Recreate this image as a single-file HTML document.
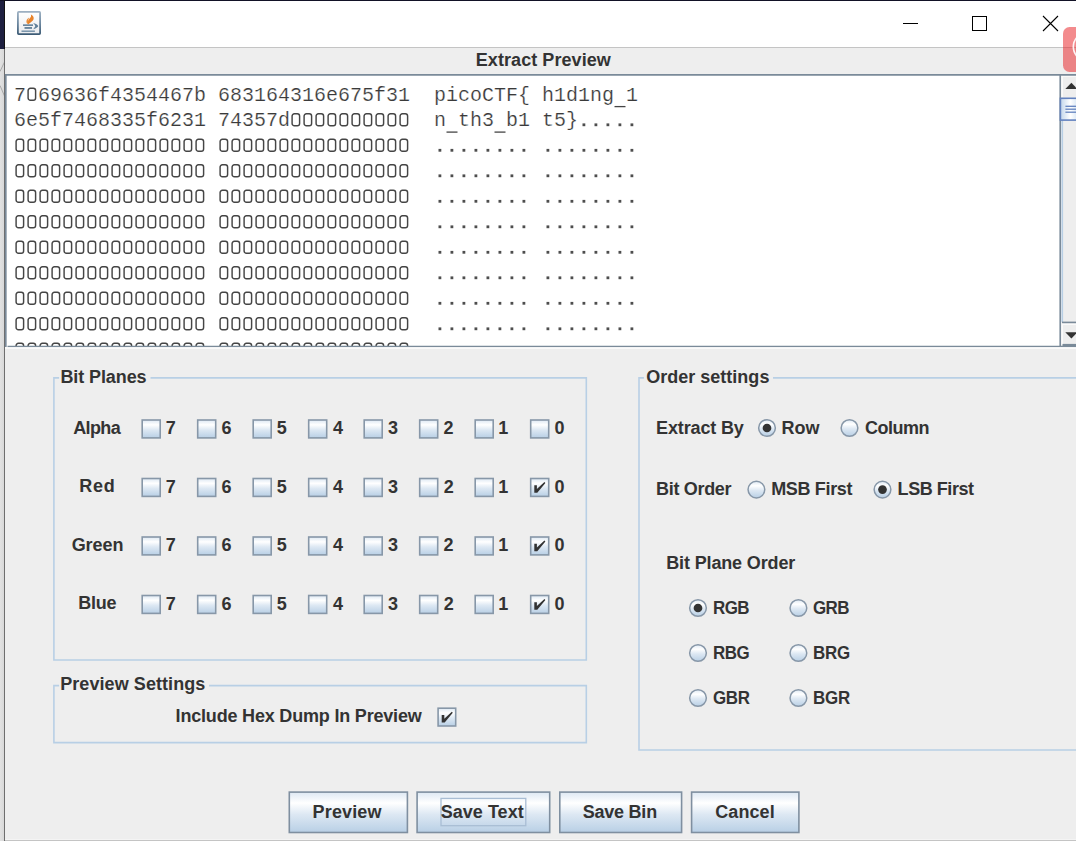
<!DOCTYPE html>
<html><head><meta charset="utf-8"><style>
*{box-sizing:border-box}
html,body{margin:0;padding:0}
body{width:1076px;height:841px;overflow:hidden;position:relative;background:#eeeeee;font-family:"Liberation Sans",sans-serif}
.a{position:absolute}
.t{position:absolute;white-space:pre;font:bold 18px/20px "Liberation Sans",sans-serif;color:#333333}
.mono{position:absolute;white-space:pre;font:20px/25.5px "Liberation Mono",monospace;color:#3a3a3a;-webkit-text-stroke:0.2px #ffffff}
</style></head><body>

<div class="a" style="left:0;top:0;width:4px;height:49px;background:#1e2040"></div>
<div class="a" style="left:0;top:49px;width:4px;height:792px;background:linear-gradient(to right,#e2e2e2,#d8d8d8)"></div>
<svg class="a" style="left:0;top:55px" width="5" height="50"><path d="M4.5 7 L0 16.5 M0 30.5 L4.5 41" stroke="#9a9a9a" stroke-width="0.8" fill="none"/></svg>
<div class="a" style="left:0;top:0;width:1076px;height:1px;background:#121226"></div>
<div class="a" style="left:4px;top:0;width:1px;height:49px;background:#111"></div>
<div class="a" style="left:4px;top:49px;width:1px;height:792px;background:#6e6e6e"></div>
<div class="a" style="left:5px;top:1px;width:1071px;height:46px;background:#ffffff"></div>
<div class="a" style="left:5px;top:47px;width:1071px;height:1px;background:#c4c4c4"></div>
<svg class="a" style="left:17px;top:11px" width="24" height="24" viewBox="0 0 24 24">
<defs><linearGradient id="ig" x1="0" y1="0" x2="0" y2="1"><stop offset="0" stop-color="#ffffff"/><stop offset="1" stop-color="#e9ebee"/></linearGradient>
<linearGradient id="is" x1="0" y1="0" x2="0" y2="1"><stop offset="0" stop-color="#9db0c2"/><stop offset="0.5" stop-color="#6f8aa2"/><stop offset="1" stop-color="#3d5c76"/></linearGradient></defs>
<rect x="0.9" y="0.9" width="22.2" height="22.2" rx="0.8" fill="url(#ig)" stroke="url(#is)" stroke-width="1.8"/>
<path d="M11.0 13.4 C10.0 10.6 11.8 8.4 13.4 6.6 C14.2 5.6 14.2 4.4 13.8 3.4 C16.8 4.6 17.6 7.6 15.6 9.8 C14.2 11.2 12.4 12.2 11.0 13.4 Z" fill="#e8832a"/>
<path d="M10.6 13.2 C8.6 11.2 9.2 8.4 12.2 6.6 C10.8 9.2 11.8 11.2 10.6 13.2 Z" fill="#ec8e3a"/>
<rect x="6" y="13.4" width="10" height="1.5" fill="#5a7a94"/>
<rect x="7.5" y="16.1" width="7.5" height="1.7" fill="#5a7a94"/>
<path d="M16.2 12.0 C19.6 12.6 21.2 14.4 21.2 15.1 C21.2 15.8 19.6 17.6 16.2 18.2 C17.4 16.8 18.2 15.9 18.2 15.1 C18.2 14.3 17.4 13.4 16.2 12.0 Z" fill="#5f7f99"/>
<rect x="4.5" y="19.5" width="13.4" height="1.4" fill="#6f8ca5"/>
</svg>
<div class="a" style="left:903px;top:23px;width:15px;height:1px;background:#000"></div>
<div class="a" style="left:972px;top:16px;width:15px;height:15px;border:1px solid #000"></div>
<svg class="a" style="left:1042px;top:15px" width="17" height="17"><path d="M1 1 L16 16 M16 1 L1 16" stroke="#000" stroke-width="1.1"/></svg>
<div class="a" style="left:5px;top:74px;width:1071px;height:274px;background:#fff"></div>
<div class="a" style="left:6px;top:75px;width:1054px;height:271px;overflow:hidden">
<div class="mono" style="left:8px;top:7.7px">7 69636f4354467b 683164316e675f31  picoCTF{ h1d1ng 1
6e5f7468335f6231 74357d            n th3 b1 t5}     
                                                    
                                                    
                                                    
                                                    
                                                    
                                                    
                                                    
                                                    
                                                    </div>
<svg class="a" style="left:0;top:0" width="1054" height="271"><defs><rect id="z" x="0" y="0" width="7.5" height="11.9" rx="2.3" fill="none" stroke="#454545" stroke-width="1.45"/></defs><use href="#z" x="22.1" y="13.3"/><line x1="608.5" y1="31.6" x2="619.5" y2="31.6" stroke="#454545" stroke-width="1.3"/><use href="#z" x="286.1" y="38.8"/><use href="#z" x="298.1" y="38.8"/><use href="#z" x="310.1" y="38.8"/><use href="#z" x="322.1" y="38.8"/><use href="#z" x="334.1" y="38.8"/><use href="#z" x="346.1" y="38.8"/><use href="#z" x="358.1" y="38.8"/><use href="#z" x="370.1" y="38.8"/><use href="#z" x="382.1" y="38.8"/><use href="#z" x="394.1" y="38.8"/><line x1="440.5" y1="57.1" x2="451.5" y2="57.1" stroke="#454545" stroke-width="1.3"/><line x1="488.5" y1="57.1" x2="499.5" y2="57.1" stroke="#454545" stroke-width="1.3"/><rect x="576.5" y="48.4" width="2.8" height="2.8" fill="#4e4e4e"/><rect x="588.5" y="48.4" width="2.8" height="2.8" fill="#4e4e4e"/><rect x="600.5" y="48.4" width="2.8" height="2.8" fill="#4e4e4e"/><rect x="612.5" y="48.4" width="2.8" height="2.8" fill="#4e4e4e"/><rect x="624.5" y="48.4" width="2.8" height="2.8" fill="#4e4e4e"/><use href="#z" x="10.1" y="64.3"/><use href="#z" x="22.1" y="64.3"/><use href="#z" x="34.1" y="64.3"/><use href="#z" x="46.1" y="64.3"/><use href="#z" x="58.1" y="64.3"/><use href="#z" x="70.1" y="64.3"/><use href="#z" x="82.1" y="64.3"/><use href="#z" x="94.1" y="64.3"/><use href="#z" x="106.1" y="64.3"/><use href="#z" x="118.1" y="64.3"/><use href="#z" x="130.1" y="64.3"/><use href="#z" x="142.1" y="64.3"/><use href="#z" x="154.1" y="64.3"/><use href="#z" x="166.1" y="64.3"/><use href="#z" x="178.1" y="64.3"/><use href="#z" x="190.1" y="64.3"/><use href="#z" x="214.1" y="64.3"/><use href="#z" x="226.1" y="64.3"/><use href="#z" x="238.1" y="64.3"/><use href="#z" x="250.1" y="64.3"/><use href="#z" x="262.1" y="64.3"/><use href="#z" x="274.1" y="64.3"/><use href="#z" x="286.1" y="64.3"/><use href="#z" x="298.1" y="64.3"/><use href="#z" x="310.1" y="64.3"/><use href="#z" x="322.1" y="64.3"/><use href="#z" x="334.1" y="64.3"/><use href="#z" x="346.1" y="64.3"/><use href="#z" x="358.1" y="64.3"/><use href="#z" x="370.1" y="64.3"/><use href="#z" x="382.1" y="64.3"/><use href="#z" x="394.1" y="64.3"/><rect x="432.5" y="73.9" width="2.8" height="2.8" fill="#4e4e4e"/><rect x="444.5" y="73.9" width="2.8" height="2.8" fill="#4e4e4e"/><rect x="456.5" y="73.9" width="2.8" height="2.8" fill="#4e4e4e"/><rect x="468.5" y="73.9" width="2.8" height="2.8" fill="#4e4e4e"/><rect x="480.5" y="73.9" width="2.8" height="2.8" fill="#4e4e4e"/><rect x="492.5" y="73.9" width="2.8" height="2.8" fill="#4e4e4e"/><rect x="504.5" y="73.9" width="2.8" height="2.8" fill="#4e4e4e"/><rect x="516.5" y="73.9" width="2.8" height="2.8" fill="#4e4e4e"/><rect x="540.5" y="73.9" width="2.8" height="2.8" fill="#4e4e4e"/><rect x="552.5" y="73.9" width="2.8" height="2.8" fill="#4e4e4e"/><rect x="564.5" y="73.9" width="2.8" height="2.8" fill="#4e4e4e"/><rect x="576.5" y="73.9" width="2.8" height="2.8" fill="#4e4e4e"/><rect x="588.5" y="73.9" width="2.8" height="2.8" fill="#4e4e4e"/><rect x="600.5" y="73.9" width="2.8" height="2.8" fill="#4e4e4e"/><rect x="612.5" y="73.9" width="2.8" height="2.8" fill="#4e4e4e"/><rect x="624.5" y="73.9" width="2.8" height="2.8" fill="#4e4e4e"/><use href="#z" x="10.1" y="89.8"/><use href="#z" x="22.1" y="89.8"/><use href="#z" x="34.1" y="89.8"/><use href="#z" x="46.1" y="89.8"/><use href="#z" x="58.1" y="89.8"/><use href="#z" x="70.1" y="89.8"/><use href="#z" x="82.1" y="89.8"/><use href="#z" x="94.1" y="89.8"/><use href="#z" x="106.1" y="89.8"/><use href="#z" x="118.1" y="89.8"/><use href="#z" x="130.1" y="89.8"/><use href="#z" x="142.1" y="89.8"/><use href="#z" x="154.1" y="89.8"/><use href="#z" x="166.1" y="89.8"/><use href="#z" x="178.1" y="89.8"/><use href="#z" x="190.1" y="89.8"/><use href="#z" x="214.1" y="89.8"/><use href="#z" x="226.1" y="89.8"/><use href="#z" x="238.1" y="89.8"/><use href="#z" x="250.1" y="89.8"/><use href="#z" x="262.1" y="89.8"/><use href="#z" x="274.1" y="89.8"/><use href="#z" x="286.1" y="89.8"/><use href="#z" x="298.1" y="89.8"/><use href="#z" x="310.1" y="89.8"/><use href="#z" x="322.1" y="89.8"/><use href="#z" x="334.1" y="89.8"/><use href="#z" x="346.1" y="89.8"/><use href="#z" x="358.1" y="89.8"/><use href="#z" x="370.1" y="89.8"/><use href="#z" x="382.1" y="89.8"/><use href="#z" x="394.1" y="89.8"/><rect x="432.5" y="99.4" width="2.8" height="2.8" fill="#4e4e4e"/><rect x="444.5" y="99.4" width="2.8" height="2.8" fill="#4e4e4e"/><rect x="456.5" y="99.4" width="2.8" height="2.8" fill="#4e4e4e"/><rect x="468.5" y="99.4" width="2.8" height="2.8" fill="#4e4e4e"/><rect x="480.5" y="99.4" width="2.8" height="2.8" fill="#4e4e4e"/><rect x="492.5" y="99.4" width="2.8" height="2.8" fill="#4e4e4e"/><rect x="504.5" y="99.4" width="2.8" height="2.8" fill="#4e4e4e"/><rect x="516.5" y="99.4" width="2.8" height="2.8" fill="#4e4e4e"/><rect x="540.5" y="99.4" width="2.8" height="2.8" fill="#4e4e4e"/><rect x="552.5" y="99.4" width="2.8" height="2.8" fill="#4e4e4e"/><rect x="564.5" y="99.4" width="2.8" height="2.8" fill="#4e4e4e"/><rect x="576.5" y="99.4" width="2.8" height="2.8" fill="#4e4e4e"/><rect x="588.5" y="99.4" width="2.8" height="2.8" fill="#4e4e4e"/><rect x="600.5" y="99.4" width="2.8" height="2.8" fill="#4e4e4e"/><rect x="612.5" y="99.4" width="2.8" height="2.8" fill="#4e4e4e"/><rect x="624.5" y="99.4" width="2.8" height="2.8" fill="#4e4e4e"/><use href="#z" x="10.1" y="115.3"/><use href="#z" x="22.1" y="115.3"/><use href="#z" x="34.1" y="115.3"/><use href="#z" x="46.1" y="115.3"/><use href="#z" x="58.1" y="115.3"/><use href="#z" x="70.1" y="115.3"/><use href="#z" x="82.1" y="115.3"/><use href="#z" x="94.1" y="115.3"/><use href="#z" x="106.1" y="115.3"/><use href="#z" x="118.1" y="115.3"/><use href="#z" x="130.1" y="115.3"/><use href="#z" x="142.1" y="115.3"/><use href="#z" x="154.1" y="115.3"/><use href="#z" x="166.1" y="115.3"/><use href="#z" x="178.1" y="115.3"/><use href="#z" x="190.1" y="115.3"/><use href="#z" x="214.1" y="115.3"/><use href="#z" x="226.1" y="115.3"/><use href="#z" x="238.1" y="115.3"/><use href="#z" x="250.1" y="115.3"/><use href="#z" x="262.1" y="115.3"/><use href="#z" x="274.1" y="115.3"/><use href="#z" x="286.1" y="115.3"/><use href="#z" x="298.1" y="115.3"/><use href="#z" x="310.1" y="115.3"/><use href="#z" x="322.1" y="115.3"/><use href="#z" x="334.1" y="115.3"/><use href="#z" x="346.1" y="115.3"/><use href="#z" x="358.1" y="115.3"/><use href="#z" x="370.1" y="115.3"/><use href="#z" x="382.1" y="115.3"/><use href="#z" x="394.1" y="115.3"/><rect x="432.5" y="124.9" width="2.8" height="2.8" fill="#4e4e4e"/><rect x="444.5" y="124.9" width="2.8" height="2.8" fill="#4e4e4e"/><rect x="456.5" y="124.9" width="2.8" height="2.8" fill="#4e4e4e"/><rect x="468.5" y="124.9" width="2.8" height="2.8" fill="#4e4e4e"/><rect x="480.5" y="124.9" width="2.8" height="2.8" fill="#4e4e4e"/><rect x="492.5" y="124.9" width="2.8" height="2.8" fill="#4e4e4e"/><rect x="504.5" y="124.9" width="2.8" height="2.8" fill="#4e4e4e"/><rect x="516.5" y="124.9" width="2.8" height="2.8" fill="#4e4e4e"/><rect x="540.5" y="124.9" width="2.8" height="2.8" fill="#4e4e4e"/><rect x="552.5" y="124.9" width="2.8" height="2.8" fill="#4e4e4e"/><rect x="564.5" y="124.9" width="2.8" height="2.8" fill="#4e4e4e"/><rect x="576.5" y="124.9" width="2.8" height="2.8" fill="#4e4e4e"/><rect x="588.5" y="124.9" width="2.8" height="2.8" fill="#4e4e4e"/><rect x="600.5" y="124.9" width="2.8" height="2.8" fill="#4e4e4e"/><rect x="612.5" y="124.9" width="2.8" height="2.8" fill="#4e4e4e"/><rect x="624.5" y="124.9" width="2.8" height="2.8" fill="#4e4e4e"/><use href="#z" x="10.1" y="140.8"/><use href="#z" x="22.1" y="140.8"/><use href="#z" x="34.1" y="140.8"/><use href="#z" x="46.1" y="140.8"/><use href="#z" x="58.1" y="140.8"/><use href="#z" x="70.1" y="140.8"/><use href="#z" x="82.1" y="140.8"/><use href="#z" x="94.1" y="140.8"/><use href="#z" x="106.1" y="140.8"/><use href="#z" x="118.1" y="140.8"/><use href="#z" x="130.1" y="140.8"/><use href="#z" x="142.1" y="140.8"/><use href="#z" x="154.1" y="140.8"/><use href="#z" x="166.1" y="140.8"/><use href="#z" x="178.1" y="140.8"/><use href="#z" x="190.1" y="140.8"/><use href="#z" x="214.1" y="140.8"/><use href="#z" x="226.1" y="140.8"/><use href="#z" x="238.1" y="140.8"/><use href="#z" x="250.1" y="140.8"/><use href="#z" x="262.1" y="140.8"/><use href="#z" x="274.1" y="140.8"/><use href="#z" x="286.1" y="140.8"/><use href="#z" x="298.1" y="140.8"/><use href="#z" x="310.1" y="140.8"/><use href="#z" x="322.1" y="140.8"/><use href="#z" x="334.1" y="140.8"/><use href="#z" x="346.1" y="140.8"/><use href="#z" x="358.1" y="140.8"/><use href="#z" x="370.1" y="140.8"/><use href="#z" x="382.1" y="140.8"/><use href="#z" x="394.1" y="140.8"/><rect x="432.5" y="150.4" width="2.8" height="2.8" fill="#4e4e4e"/><rect x="444.5" y="150.4" width="2.8" height="2.8" fill="#4e4e4e"/><rect x="456.5" y="150.4" width="2.8" height="2.8" fill="#4e4e4e"/><rect x="468.5" y="150.4" width="2.8" height="2.8" fill="#4e4e4e"/><rect x="480.5" y="150.4" width="2.8" height="2.8" fill="#4e4e4e"/><rect x="492.5" y="150.4" width="2.8" height="2.8" fill="#4e4e4e"/><rect x="504.5" y="150.4" width="2.8" height="2.8" fill="#4e4e4e"/><rect x="516.5" y="150.4" width="2.8" height="2.8" fill="#4e4e4e"/><rect x="540.5" y="150.4" width="2.8" height="2.8" fill="#4e4e4e"/><rect x="552.5" y="150.4" width="2.8" height="2.8" fill="#4e4e4e"/><rect x="564.5" y="150.4" width="2.8" height="2.8" fill="#4e4e4e"/><rect x="576.5" y="150.4" width="2.8" height="2.8" fill="#4e4e4e"/><rect x="588.5" y="150.4" width="2.8" height="2.8" fill="#4e4e4e"/><rect x="600.5" y="150.4" width="2.8" height="2.8" fill="#4e4e4e"/><rect x="612.5" y="150.4" width="2.8" height="2.8" fill="#4e4e4e"/><rect x="624.5" y="150.4" width="2.8" height="2.8" fill="#4e4e4e"/><use href="#z" x="10.1" y="166.3"/><use href="#z" x="22.1" y="166.3"/><use href="#z" x="34.1" y="166.3"/><use href="#z" x="46.1" y="166.3"/><use href="#z" x="58.1" y="166.3"/><use href="#z" x="70.1" y="166.3"/><use href="#z" x="82.1" y="166.3"/><use href="#z" x="94.1" y="166.3"/><use href="#z" x="106.1" y="166.3"/><use href="#z" x="118.1" y="166.3"/><use href="#z" x="130.1" y="166.3"/><use href="#z" x="142.1" y="166.3"/><use href="#z" x="154.1" y="166.3"/><use href="#z" x="166.1" y="166.3"/><use href="#z" x="178.1" y="166.3"/><use href="#z" x="190.1" y="166.3"/><use href="#z" x="214.1" y="166.3"/><use href="#z" x="226.1" y="166.3"/><use href="#z" x="238.1" y="166.3"/><use href="#z" x="250.1" y="166.3"/><use href="#z" x="262.1" y="166.3"/><use href="#z" x="274.1" y="166.3"/><use href="#z" x="286.1" y="166.3"/><use href="#z" x="298.1" y="166.3"/><use href="#z" x="310.1" y="166.3"/><use href="#z" x="322.1" y="166.3"/><use href="#z" x="334.1" y="166.3"/><use href="#z" x="346.1" y="166.3"/><use href="#z" x="358.1" y="166.3"/><use href="#z" x="370.1" y="166.3"/><use href="#z" x="382.1" y="166.3"/><use href="#z" x="394.1" y="166.3"/><rect x="432.5" y="175.9" width="2.8" height="2.8" fill="#4e4e4e"/><rect x="444.5" y="175.9" width="2.8" height="2.8" fill="#4e4e4e"/><rect x="456.5" y="175.9" width="2.8" height="2.8" fill="#4e4e4e"/><rect x="468.5" y="175.9" width="2.8" height="2.8" fill="#4e4e4e"/><rect x="480.5" y="175.9" width="2.8" height="2.8" fill="#4e4e4e"/><rect x="492.5" y="175.9" width="2.8" height="2.8" fill="#4e4e4e"/><rect x="504.5" y="175.9" width="2.8" height="2.8" fill="#4e4e4e"/><rect x="516.5" y="175.9" width="2.8" height="2.8" fill="#4e4e4e"/><rect x="540.5" y="175.9" width="2.8" height="2.8" fill="#4e4e4e"/><rect x="552.5" y="175.9" width="2.8" height="2.8" fill="#4e4e4e"/><rect x="564.5" y="175.9" width="2.8" height="2.8" fill="#4e4e4e"/><rect x="576.5" y="175.9" width="2.8" height="2.8" fill="#4e4e4e"/><rect x="588.5" y="175.9" width="2.8" height="2.8" fill="#4e4e4e"/><rect x="600.5" y="175.9" width="2.8" height="2.8" fill="#4e4e4e"/><rect x="612.5" y="175.9" width="2.8" height="2.8" fill="#4e4e4e"/><rect x="624.5" y="175.9" width="2.8" height="2.8" fill="#4e4e4e"/><use href="#z" x="10.1" y="191.8"/><use href="#z" x="22.1" y="191.8"/><use href="#z" x="34.1" y="191.8"/><use href="#z" x="46.1" y="191.8"/><use href="#z" x="58.1" y="191.8"/><use href="#z" x="70.1" y="191.8"/><use href="#z" x="82.1" y="191.8"/><use href="#z" x="94.1" y="191.8"/><use href="#z" x="106.1" y="191.8"/><use href="#z" x="118.1" y="191.8"/><use href="#z" x="130.1" y="191.8"/><use href="#z" x="142.1" y="191.8"/><use href="#z" x="154.1" y="191.8"/><use href="#z" x="166.1" y="191.8"/><use href="#z" x="178.1" y="191.8"/><use href="#z" x="190.1" y="191.8"/><use href="#z" x="214.1" y="191.8"/><use href="#z" x="226.1" y="191.8"/><use href="#z" x="238.1" y="191.8"/><use href="#z" x="250.1" y="191.8"/><use href="#z" x="262.1" y="191.8"/><use href="#z" x="274.1" y="191.8"/><use href="#z" x="286.1" y="191.8"/><use href="#z" x="298.1" y="191.8"/><use href="#z" x="310.1" y="191.8"/><use href="#z" x="322.1" y="191.8"/><use href="#z" x="334.1" y="191.8"/><use href="#z" x="346.1" y="191.8"/><use href="#z" x="358.1" y="191.8"/><use href="#z" x="370.1" y="191.8"/><use href="#z" x="382.1" y="191.8"/><use href="#z" x="394.1" y="191.8"/><rect x="432.5" y="201.4" width="2.8" height="2.8" fill="#4e4e4e"/><rect x="444.5" y="201.4" width="2.8" height="2.8" fill="#4e4e4e"/><rect x="456.5" y="201.4" width="2.8" height="2.8" fill="#4e4e4e"/><rect x="468.5" y="201.4" width="2.8" height="2.8" fill="#4e4e4e"/><rect x="480.5" y="201.4" width="2.8" height="2.8" fill="#4e4e4e"/><rect x="492.5" y="201.4" width="2.8" height="2.8" fill="#4e4e4e"/><rect x="504.5" y="201.4" width="2.8" height="2.8" fill="#4e4e4e"/><rect x="516.5" y="201.4" width="2.8" height="2.8" fill="#4e4e4e"/><rect x="540.5" y="201.4" width="2.8" height="2.8" fill="#4e4e4e"/><rect x="552.5" y="201.4" width="2.8" height="2.8" fill="#4e4e4e"/><rect x="564.5" y="201.4" width="2.8" height="2.8" fill="#4e4e4e"/><rect x="576.5" y="201.4" width="2.8" height="2.8" fill="#4e4e4e"/><rect x="588.5" y="201.4" width="2.8" height="2.8" fill="#4e4e4e"/><rect x="600.5" y="201.4" width="2.8" height="2.8" fill="#4e4e4e"/><rect x="612.5" y="201.4" width="2.8" height="2.8" fill="#4e4e4e"/><rect x="624.5" y="201.4" width="2.8" height="2.8" fill="#4e4e4e"/><use href="#z" x="10.1" y="217.3"/><use href="#z" x="22.1" y="217.3"/><use href="#z" x="34.1" y="217.3"/><use href="#z" x="46.1" y="217.3"/><use href="#z" x="58.1" y="217.3"/><use href="#z" x="70.1" y="217.3"/><use href="#z" x="82.1" y="217.3"/><use href="#z" x="94.1" y="217.3"/><use href="#z" x="106.1" y="217.3"/><use href="#z" x="118.1" y="217.3"/><use href="#z" x="130.1" y="217.3"/><use href="#z" x="142.1" y="217.3"/><use href="#z" x="154.1" y="217.3"/><use href="#z" x="166.1" y="217.3"/><use href="#z" x="178.1" y="217.3"/><use href="#z" x="190.1" y="217.3"/><use href="#z" x="214.1" y="217.3"/><use href="#z" x="226.1" y="217.3"/><use href="#z" x="238.1" y="217.3"/><use href="#z" x="250.1" y="217.3"/><use href="#z" x="262.1" y="217.3"/><use href="#z" x="274.1" y="217.3"/><use href="#z" x="286.1" y="217.3"/><use href="#z" x="298.1" y="217.3"/><use href="#z" x="310.1" y="217.3"/><use href="#z" x="322.1" y="217.3"/><use href="#z" x="334.1" y="217.3"/><use href="#z" x="346.1" y="217.3"/><use href="#z" x="358.1" y="217.3"/><use href="#z" x="370.1" y="217.3"/><use href="#z" x="382.1" y="217.3"/><use href="#z" x="394.1" y="217.3"/><rect x="432.5" y="226.9" width="2.8" height="2.8" fill="#4e4e4e"/><rect x="444.5" y="226.9" width="2.8" height="2.8" fill="#4e4e4e"/><rect x="456.5" y="226.9" width="2.8" height="2.8" fill="#4e4e4e"/><rect x="468.5" y="226.9" width="2.8" height="2.8" fill="#4e4e4e"/><rect x="480.5" y="226.9" width="2.8" height="2.8" fill="#4e4e4e"/><rect x="492.5" y="226.9" width="2.8" height="2.8" fill="#4e4e4e"/><rect x="504.5" y="226.9" width="2.8" height="2.8" fill="#4e4e4e"/><rect x="516.5" y="226.9" width="2.8" height="2.8" fill="#4e4e4e"/><rect x="540.5" y="226.9" width="2.8" height="2.8" fill="#4e4e4e"/><rect x="552.5" y="226.9" width="2.8" height="2.8" fill="#4e4e4e"/><rect x="564.5" y="226.9" width="2.8" height="2.8" fill="#4e4e4e"/><rect x="576.5" y="226.9" width="2.8" height="2.8" fill="#4e4e4e"/><rect x="588.5" y="226.9" width="2.8" height="2.8" fill="#4e4e4e"/><rect x="600.5" y="226.9" width="2.8" height="2.8" fill="#4e4e4e"/><rect x="612.5" y="226.9" width="2.8" height="2.8" fill="#4e4e4e"/><rect x="624.5" y="226.9" width="2.8" height="2.8" fill="#4e4e4e"/><use href="#z" x="10.1" y="242.8"/><use href="#z" x="22.1" y="242.8"/><use href="#z" x="34.1" y="242.8"/><use href="#z" x="46.1" y="242.8"/><use href="#z" x="58.1" y="242.8"/><use href="#z" x="70.1" y="242.8"/><use href="#z" x="82.1" y="242.8"/><use href="#z" x="94.1" y="242.8"/><use href="#z" x="106.1" y="242.8"/><use href="#z" x="118.1" y="242.8"/><use href="#z" x="130.1" y="242.8"/><use href="#z" x="142.1" y="242.8"/><use href="#z" x="154.1" y="242.8"/><use href="#z" x="166.1" y="242.8"/><use href="#z" x="178.1" y="242.8"/><use href="#z" x="190.1" y="242.8"/><use href="#z" x="214.1" y="242.8"/><use href="#z" x="226.1" y="242.8"/><use href="#z" x="238.1" y="242.8"/><use href="#z" x="250.1" y="242.8"/><use href="#z" x="262.1" y="242.8"/><use href="#z" x="274.1" y="242.8"/><use href="#z" x="286.1" y="242.8"/><use href="#z" x="298.1" y="242.8"/><use href="#z" x="310.1" y="242.8"/><use href="#z" x="322.1" y="242.8"/><use href="#z" x="334.1" y="242.8"/><use href="#z" x="346.1" y="242.8"/><use href="#z" x="358.1" y="242.8"/><use href="#z" x="370.1" y="242.8"/><use href="#z" x="382.1" y="242.8"/><use href="#z" x="394.1" y="242.8"/><rect x="432.5" y="252.4" width="2.8" height="2.8" fill="#4e4e4e"/><rect x="444.5" y="252.4" width="2.8" height="2.8" fill="#4e4e4e"/><rect x="456.5" y="252.4" width="2.8" height="2.8" fill="#4e4e4e"/><rect x="468.5" y="252.4" width="2.8" height="2.8" fill="#4e4e4e"/><rect x="480.5" y="252.4" width="2.8" height="2.8" fill="#4e4e4e"/><rect x="492.5" y="252.4" width="2.8" height="2.8" fill="#4e4e4e"/><rect x="504.5" y="252.4" width="2.8" height="2.8" fill="#4e4e4e"/><rect x="516.5" y="252.4" width="2.8" height="2.8" fill="#4e4e4e"/><rect x="540.5" y="252.4" width="2.8" height="2.8" fill="#4e4e4e"/><rect x="552.5" y="252.4" width="2.8" height="2.8" fill="#4e4e4e"/><rect x="564.5" y="252.4" width="2.8" height="2.8" fill="#4e4e4e"/><rect x="576.5" y="252.4" width="2.8" height="2.8" fill="#4e4e4e"/><rect x="588.5" y="252.4" width="2.8" height="2.8" fill="#4e4e4e"/><rect x="600.5" y="252.4" width="2.8" height="2.8" fill="#4e4e4e"/><rect x="612.5" y="252.4" width="2.8" height="2.8" fill="#4e4e4e"/><rect x="624.5" y="252.4" width="2.8" height="2.8" fill="#4e4e4e"/><use href="#z" x="10.1" y="268.3"/><use href="#z" x="22.1" y="268.3"/><use href="#z" x="34.1" y="268.3"/><use href="#z" x="46.1" y="268.3"/><use href="#z" x="58.1" y="268.3"/><use href="#z" x="70.1" y="268.3"/><use href="#z" x="82.1" y="268.3"/><use href="#z" x="94.1" y="268.3"/><use href="#z" x="106.1" y="268.3"/><use href="#z" x="118.1" y="268.3"/><use href="#z" x="130.1" y="268.3"/><use href="#z" x="142.1" y="268.3"/><use href="#z" x="154.1" y="268.3"/><use href="#z" x="166.1" y="268.3"/><use href="#z" x="178.1" y="268.3"/><use href="#z" x="190.1" y="268.3"/><use href="#z" x="214.1" y="268.3"/><use href="#z" x="226.1" y="268.3"/><use href="#z" x="238.1" y="268.3"/><use href="#z" x="250.1" y="268.3"/><use href="#z" x="262.1" y="268.3"/><use href="#z" x="274.1" y="268.3"/><use href="#z" x="286.1" y="268.3"/><use href="#z" x="298.1" y="268.3"/><use href="#z" x="310.1" y="268.3"/><use href="#z" x="322.1" y="268.3"/><use href="#z" x="334.1" y="268.3"/><use href="#z" x="346.1" y="268.3"/><use href="#z" x="358.1" y="268.3"/><use href="#z" x="370.1" y="268.3"/><use href="#z" x="382.1" y="268.3"/><use href="#z" x="394.1" y="268.3"/><rect x="432.5" y="277.9" width="2.8" height="2.8" fill="#4e4e4e"/><rect x="444.5" y="277.9" width="2.8" height="2.8" fill="#4e4e4e"/><rect x="456.5" y="277.9" width="2.8" height="2.8" fill="#4e4e4e"/><rect x="468.5" y="277.9" width="2.8" height="2.8" fill="#4e4e4e"/><rect x="480.5" y="277.9" width="2.8" height="2.8" fill="#4e4e4e"/><rect x="492.5" y="277.9" width="2.8" height="2.8" fill="#4e4e4e"/><rect x="504.5" y="277.9" width="2.8" height="2.8" fill="#4e4e4e"/><rect x="516.5" y="277.9" width="2.8" height="2.8" fill="#4e4e4e"/><rect x="540.5" y="277.9" width="2.8" height="2.8" fill="#4e4e4e"/><rect x="552.5" y="277.9" width="2.8" height="2.8" fill="#4e4e4e"/><rect x="564.5" y="277.9" width="2.8" height="2.8" fill="#4e4e4e"/><rect x="576.5" y="277.9" width="2.8" height="2.8" fill="#4e4e4e"/><rect x="588.5" y="277.9" width="2.8" height="2.8" fill="#4e4e4e"/><rect x="600.5" y="277.9" width="2.8" height="2.8" fill="#4e4e4e"/><rect x="612.5" y="277.9" width="2.8" height="2.8" fill="#4e4e4e"/><rect x="624.5" y="277.9" width="2.8" height="2.8" fill="#4e4e4e"/></svg>
</div>
<div class="a" style="left:1060px;top:75px;width:16px;height:271px;background:#eeeeee"></div>
<svg class="a" style="left:0;top:0" width="1076" height="841"><defs><linearGradient id="cbg" x1="0" y1="0" x2="0" y2="1"><stop offset="0" stop-color="#dde8f3"/><stop offset="0.27" stop-color="#ffffff"/><stop offset="0.55" stop-color="#dde8f3"/><stop offset="1" stop-color="#b8cfe5"/></linearGradient><linearGradient id="thg" x1="0" y1="0" x2="1" y2="0"><stop offset="0" stop-color="#c2d6ec"/><stop offset="0.5" stop-color="#ffffff"/><stop offset="1" stop-color="#c8dcf0"/></linearGradient></defs><line x1="1062.3" y1="75.5" x2="1062.3" y2="97" stroke="#fafafa" stroke-width="1.5"/><line x1="1062" y1="76.3" x2="1076" y2="76.3" stroke="#fafafa" stroke-width="1.2"/><line x1="1062.3" y1="120" x2="1062.3" y2="322" stroke="#b8cfe5" stroke-width="1.6"/><line x1="1062.3" y1="323" x2="1062.3" y2="345" stroke="#fafafa" stroke-width="1.5"/><line x1="1062" y1="324.2" x2="1076" y2="324.2" stroke="#fafafa" stroke-width="1.5"/><line x1="1062" y1="322.4" x2="1076" y2="322.4" stroke="#7a8a99" stroke-width="1.6"/><line x1="1062.5" y1="345.2" x2="1076" y2="345.2" stroke="#7a8a99" stroke-width="2.6"/><path d="M1065.3 88.9 L1071.4 82.8 L1077.5 88.9 Z" fill="#333"/><path d="M1065.3 332.3 L1071.4 338.4 L1077.5 332.3 Z" fill="#333"/><line x1="5" y1="74.8" x2="1076" y2="74.8" stroke="#7a8a99" stroke-width="1.7"/><line x1="5.8" y1="74" x2="5.8" y2="347" stroke="#7a8a99" stroke-width="1.7"/><line x1="1060.2" y1="75" x2="1060.2" y2="346" stroke="#7a8a99" stroke-width="1.6"/><line x1="7.5" y1="346.5" x2="1076" y2="346.5" stroke="#7a8a99" stroke-width="1.5"/><line x1="5" y1="348.1" x2="1076" y2="348.1" stroke="#fafafa" stroke-width="1.6"/><rect x="1060.4" y="98.3" width="20" height="21.8" fill="url(#thg)" stroke="#6382bf" stroke-width="1.6"/><line x1="1065.4" y1="106.3" x2="1076" y2="106.3" stroke="#6382bf" stroke-width="1.3"/><line x1="1065.4" y1="109.2" x2="1076" y2="109.2" stroke="#6382bf" stroke-width="1.3"/><line x1="1065.4" y1="112.2" x2="1076" y2="112.2" stroke="#6382bf" stroke-width="1.3"/><g fill="none" stroke="#b8cfe5" stroke-width="1.6"><path d="M59.1 377.9 L53.9 377.9 L53.9 660 L586.3 660 L586.3 377.9 L150.5 377.9"/><path d="M59.1 685.6 L53.9 685.6 L53.9 742.6 L586.3 742.6 L586.3 685.6 L209 685.6"/><path d="M643.9 377.9 L639 377.9 L639 750 L1080 750 M1080 377.9 L773 377.9"/></g><rect x="142.20" y="420.00" width="18.00" height="17.90" fill="url(#cbg)" stroke="#8797a8" stroke-width="1.6"/><rect x="197.70" y="420.00" width="18.00" height="17.90" fill="url(#cbg)" stroke="#8797a8" stroke-width="1.6"/><rect x="253.20" y="420.00" width="18.00" height="17.90" fill="url(#cbg)" stroke="#8797a8" stroke-width="1.6"/><rect x="308.70" y="420.00" width="18.00" height="17.90" fill="url(#cbg)" stroke="#8797a8" stroke-width="1.6"/><rect x="364.20" y="420.00" width="18.00" height="17.90" fill="url(#cbg)" stroke="#8797a8" stroke-width="1.6"/><rect x="419.70" y="420.00" width="18.00" height="17.90" fill="url(#cbg)" stroke="#8797a8" stroke-width="1.6"/><rect x="475.20" y="420.00" width="18.00" height="17.90" fill="url(#cbg)" stroke="#8797a8" stroke-width="1.6"/><rect x="530.70" y="420.00" width="18.00" height="17.90" fill="url(#cbg)" stroke="#8797a8" stroke-width="1.6"/><rect x="142.20" y="478.50" width="18.00" height="17.90" fill="url(#cbg)" stroke="#8797a8" stroke-width="1.6"/><rect x="197.70" y="478.50" width="18.00" height="17.90" fill="url(#cbg)" stroke="#8797a8" stroke-width="1.6"/><rect x="253.20" y="478.50" width="18.00" height="17.90" fill="url(#cbg)" stroke="#8797a8" stroke-width="1.6"/><rect x="308.70" y="478.50" width="18.00" height="17.90" fill="url(#cbg)" stroke="#8797a8" stroke-width="1.6"/><rect x="364.20" y="478.50" width="18.00" height="17.90" fill="url(#cbg)" stroke="#8797a8" stroke-width="1.6"/><rect x="419.70" y="478.50" width="18.00" height="17.90" fill="url(#cbg)" stroke="#8797a8" stroke-width="1.6"/><rect x="475.20" y="478.50" width="18.00" height="17.90" fill="url(#cbg)" stroke="#8797a8" stroke-width="1.6"/><rect x="530.70" y="478.50" width="18.00" height="17.90" fill="url(#cbg)" stroke="#8797a8" stroke-width="1.6"/><path transform="translate(529.90 477.70)" d="M4.4 7.6 L7.0 7.6 L7.0 11.3 L14.5 4.3 L15.5 5.4 L7.4 15.0 L4.4 15.0 Z" fill="#333"/><rect x="142.20" y="537.00" width="18.00" height="17.90" fill="url(#cbg)" stroke="#8797a8" stroke-width="1.6"/><rect x="197.70" y="537.00" width="18.00" height="17.90" fill="url(#cbg)" stroke="#8797a8" stroke-width="1.6"/><rect x="253.20" y="537.00" width="18.00" height="17.90" fill="url(#cbg)" stroke="#8797a8" stroke-width="1.6"/><rect x="308.70" y="537.00" width="18.00" height="17.90" fill="url(#cbg)" stroke="#8797a8" stroke-width="1.6"/><rect x="364.20" y="537.00" width="18.00" height="17.90" fill="url(#cbg)" stroke="#8797a8" stroke-width="1.6"/><rect x="419.70" y="537.00" width="18.00" height="17.90" fill="url(#cbg)" stroke="#8797a8" stroke-width="1.6"/><rect x="475.20" y="537.00" width="18.00" height="17.90" fill="url(#cbg)" stroke="#8797a8" stroke-width="1.6"/><rect x="530.70" y="537.00" width="18.00" height="17.90" fill="url(#cbg)" stroke="#8797a8" stroke-width="1.6"/><path transform="translate(529.90 536.20)" d="M4.4 7.6 L7.0 7.6 L7.0 11.3 L14.5 4.3 L15.5 5.4 L7.4 15.0 L4.4 15.0 Z" fill="#333"/><rect x="142.20" y="595.50" width="18.00" height="17.90" fill="url(#cbg)" stroke="#8797a8" stroke-width="1.6"/><rect x="197.70" y="595.50" width="18.00" height="17.90" fill="url(#cbg)" stroke="#8797a8" stroke-width="1.6"/><rect x="253.20" y="595.50" width="18.00" height="17.90" fill="url(#cbg)" stroke="#8797a8" stroke-width="1.6"/><rect x="308.70" y="595.50" width="18.00" height="17.90" fill="url(#cbg)" stroke="#8797a8" stroke-width="1.6"/><rect x="364.20" y="595.50" width="18.00" height="17.90" fill="url(#cbg)" stroke="#8797a8" stroke-width="1.6"/><rect x="419.70" y="595.50" width="18.00" height="17.90" fill="url(#cbg)" stroke="#8797a8" stroke-width="1.6"/><rect x="475.20" y="595.50" width="18.00" height="17.90" fill="url(#cbg)" stroke="#8797a8" stroke-width="1.6"/><rect x="530.70" y="595.50" width="18.00" height="17.90" fill="url(#cbg)" stroke="#8797a8" stroke-width="1.6"/><path transform="translate(529.90 594.70)" d="M4.4 7.6 L7.0 7.6 L7.0 11.3 L14.5 4.3 L15.5 5.4 L7.4 15.0 L4.4 15.0 Z" fill="#333"/><rect x="438.10" y="708.20" width="17.60" height="17.80" fill="url(#cbg)" stroke="#8797a8" stroke-width="1.6"/><path transform="translate(437.30 707.40)" d="M4.4 7.6 L7.0 7.6 L7.0 11.3 L14.5 4.3 L15.5 5.4 L7.4 15.0 L4.4 15.0 Z" fill="#333"/><circle cx="767" cy="428" r="8.35" fill="url(#cbg)" stroke="#8797a8" stroke-width="1.5"/><circle cx="767" cy="428" r="4.35" fill="#333"/><circle cx="849.5" cy="428" r="8.35" fill="url(#cbg)" stroke="#8797a8" stroke-width="1.5"/><circle cx="756.4" cy="489.6" r="8.35" fill="url(#cbg)" stroke="#8797a8" stroke-width="1.5"/><circle cx="882.5" cy="489.6" r="8.35" fill="url(#cbg)" stroke="#8797a8" stroke-width="1.5"/><circle cx="882.5" cy="489.6" r="4.35" fill="#333"/><circle cx="698" cy="608" r="8.35" fill="url(#cbg)" stroke="#8797a8" stroke-width="1.5"/><circle cx="698" cy="608" r="4.35" fill="#333"/><circle cx="798.4" cy="608" r="8.35" fill="url(#cbg)" stroke="#8797a8" stroke-width="1.5"/><circle cx="698" cy="653" r="8.35" fill="url(#cbg)" stroke="#8797a8" stroke-width="1.5"/><circle cx="798.4" cy="653" r="8.35" fill="url(#cbg)" stroke="#8797a8" stroke-width="1.5"/><circle cx="698" cy="698" r="8.35" fill="url(#cbg)" stroke="#8797a8" stroke-width="1.5"/><circle cx="798.4" cy="698" r="8.35" fill="url(#cbg)" stroke="#8797a8" stroke-width="1.5"/><rect x="289.30" y="792.10" width="118.10" height="40.40" fill="url(#cbg)" stroke="#7f8fa0" stroke-width="1.6"/><rect x="417.10" y="792.10" width="132.60" height="40.40" fill="url(#cbg)" stroke="#7f8fa0" stroke-width="1.6"/><rect x="559.80" y="792.10" width="121.80" height="40.40" fill="url(#cbg)" stroke="#7f8fa0" stroke-width="1.6"/><rect x="691.60" y="792.10" width="107.30" height="40.40" fill="url(#cbg)" stroke="#7f8fa0" stroke-width="1.6"/><rect x="441.0" y="798.4" width="84.8" height="27.3" fill="none" stroke="#a8bdd4" stroke-width="1.3"/></svg>
<svg class="a" style="left:1063px;top:26.8px" width="13" height="45.2"><rect x="0" y="0" width="30" height="45" rx="6.5" fill="rgb(234,44,48)" fill-opacity="0.55"/><circle cx="24.5" cy="19.8" r="14.2" stroke="#fff" stroke-opacity="0.9" stroke-width="1.6" fill="none"/></svg>
<div class="a" style="left:5px;top:839px;width:1071px;height:1px;background:#f4f4f4"></div>
<div class="a" style="left:5px;top:840px;width:1071px;height:1px;background:#c4c4c4"></div>
<div class="t" id="ep" style="left:475.74px;top:49.76px;letter-spacing:0.074px;">Extract Preview</div>
<div class="t" id="bp" style="left:60.44px;top:367.16px;letter-spacing:-0.098px;">Bit Planes</div>
<div class="t" id="lab0" style="left:73.22px;top:417.86px;letter-spacing:-0.619px;">Alpha</div>
<div class="t" id="d0_0" style="left:165.72px;top:418.26px;letter-spacing:0.000px;">7</div>
<div class="t" id="d0_1" style="left:221.55px;top:418.26px;letter-spacing:0.000px;">6</div>
<div class="t" id="d0_2" style="left:276.72px;top:418.26px;letter-spacing:0.000px;">5</div>
<div class="t" id="d0_3" style="left:333.09px;top:418.26px;letter-spacing:0.000px;">4</div>
<div class="t" id="d0_4" style="left:388.00px;top:418.26px;letter-spacing:0.000px;">3</div>
<div class="t" id="d0_5" style="left:443.57px;top:418.26px;letter-spacing:0.000px;">2</div>
<div class="t" id="d0_6" style="left:498.35px;top:418.26px;letter-spacing:0.000px;">1</div>
<div class="t" id="d0_7" style="left:554.56px;top:418.26px;letter-spacing:0.000px;">0</div>
<div class="t" id="lab1" style="left:79.22px;top:476.36px;letter-spacing:0.802px;">Red</div>
<div class="t" id="d1_0" style="left:165.72px;top:476.76px;letter-spacing:0.000px;">7</div>
<div class="t" id="d1_1" style="left:221.55px;top:476.76px;letter-spacing:0.000px;">6</div>
<div class="t" id="d1_2" style="left:276.72px;top:476.76px;letter-spacing:0.000px;">5</div>
<div class="t" id="d1_3" style="left:333.09px;top:476.76px;letter-spacing:0.000px;">4</div>
<div class="t" id="d1_4" style="left:388.00px;top:476.76px;letter-spacing:0.000px;">3</div>
<div class="t" id="d1_5" style="left:443.63px;top:476.76px;letter-spacing:0.000px;">2</div>
<div class="t" id="d1_6" style="left:498.35px;top:476.76px;letter-spacing:0.000px;">1</div>
<div class="t" id="d1_7" style="left:554.56px;top:476.76px;letter-spacing:0.000px;">0</div>
<div class="t" id="lab2" style="left:71.65px;top:534.86px;letter-spacing:-0.047px;">Green</div>
<div class="t" id="d2_0" style="left:165.72px;top:535.26px;letter-spacing:0.000px;">7</div>
<div class="t" id="d2_1" style="left:221.55px;top:535.26px;letter-spacing:0.000px;">6</div>
<div class="t" id="d2_2" style="left:276.72px;top:535.26px;letter-spacing:0.000px;">5</div>
<div class="t" id="d2_3" style="left:333.09px;top:535.26px;letter-spacing:0.000px;">4</div>
<div class="t" id="d2_4" style="left:388.00px;top:535.26px;letter-spacing:0.000px;">3</div>
<div class="t" id="d2_5" style="left:443.57px;top:535.26px;letter-spacing:0.000px;">2</div>
<div class="t" id="d2_6" style="left:498.35px;top:535.26px;letter-spacing:0.000px;">1</div>
<div class="t" id="d2_7" style="left:554.56px;top:535.26px;letter-spacing:0.000px;">0</div>
<div class="t" id="lab3" style="left:78.28px;top:593.36px;letter-spacing:-0.233px;">Blue</div>
<div class="t" id="d3_0" style="left:165.72px;top:593.76px;letter-spacing:0.000px;">7</div>
<div class="t" id="d3_1" style="left:221.55px;top:593.76px;letter-spacing:0.000px;">6</div>
<div class="t" id="d3_2" style="left:276.72px;top:593.76px;letter-spacing:0.000px;">5</div>
<div class="t" id="d3_3" style="left:333.09px;top:593.76px;letter-spacing:0.000px;">4</div>
<div class="t" id="d3_4" style="left:388.00px;top:593.76px;letter-spacing:0.000px;">3</div>
<div class="t" id="d3_5" style="left:443.63px;top:593.76px;letter-spacing:0.000px;">2</div>
<div class="t" id="d3_6" style="left:498.35px;top:593.76px;letter-spacing:0.000px;">1</div>
<div class="t" id="d3_7" style="left:554.56px;top:593.76px;letter-spacing:0.000px;">0</div>
<div class="t" id="ps" style="left:60.17px;top:674.36px;letter-spacing:0.076px;">Preview Settings</div>
<div class="t" id="ihd" style="left:175.62px;top:705.96px;letter-spacing:-0.191px;">Include Hex Dump In Preview</div>
<div class="t" id="os" style="left:646.13px;top:366.66px;letter-spacing:0.018px;">Order settings</div>
<div class="t" id="eb" style="left:656.08px;top:417.76px;letter-spacing:-0.144px;">Extract By</div>
<div class="t" id="row" style="left:781.44px;top:417.76px;letter-spacing:-0.021px;">Row</div>
<div class="t" id="col" style="left:864.93px;top:417.76px;letter-spacing:-0.497px;">Column</div>
<div class="t" id="bo" style="left:656.08px;top:479.36px;letter-spacing:-0.316px;">Bit Order</div>
<div class="t" id="msb" style="left:771.17px;top:479.36px;letter-spacing:-0.332px;">MSB First</div>
<div class="t" id="lsb" style="left:897.61px;top:479.36px;letter-spacing:-0.453px;">LSB First</div>
<div class="t" id="bpo" style="left:666.22px;top:553.06px;letter-spacing:-0.138px;">Bit Plane Order</div>
<div class="t" id="o0a" style="left:713.11px;top:598.06px;letter-spacing:-0.548px;transform:scaleX(0.94);transform-origin:0 0;">RGB</div>
<div class="t" id="o0b" style="left:813.46px;top:598.06px;letter-spacing:-0.633px;transform:scaleX(0.94);transform-origin:0 0;">GRB</div>
<div class="t" id="o1a" style="left:713.11px;top:643.06px;letter-spacing:-0.440px;transform:scaleX(0.94);transform-origin:0 0;">RBG</div>
<div class="t" id="o1b" style="left:813.34px;top:643.06px;letter-spacing:-0.232px;transform:scaleX(0.94);transform-origin:0 0;">BRG</div>
<div class="t" id="o2a" style="left:713.24px;top:688.06px;letter-spacing:-0.329px;transform:scaleX(0.94);transform-origin:0 0;">GBR</div>
<div class="t" id="o2b" style="left:813.34px;top:688.06px;letter-spacing:-0.220px;transform:scaleX(0.94);transform-origin:0 0;">BGR</div>
<div class="t" id="btn_Preview" style="left:312.59px;top:802.16px;letter-spacing:0.145px;">Preview</div>
<div class="t" id="btn_Save_Text" style="left:440.71px;top:802.16px;letter-spacing:0.032px;">Save Text</div>
<div class="t" id="btn_Save_Bin" style="left:582.73px;top:802.16px;letter-spacing:-0.233px;">Save Bin</div>
<div class="t" id="btn_Cancel" style="left:715.17px;top:802.16px;letter-spacing:0.107px;">Cancel</div>
</body></html>
